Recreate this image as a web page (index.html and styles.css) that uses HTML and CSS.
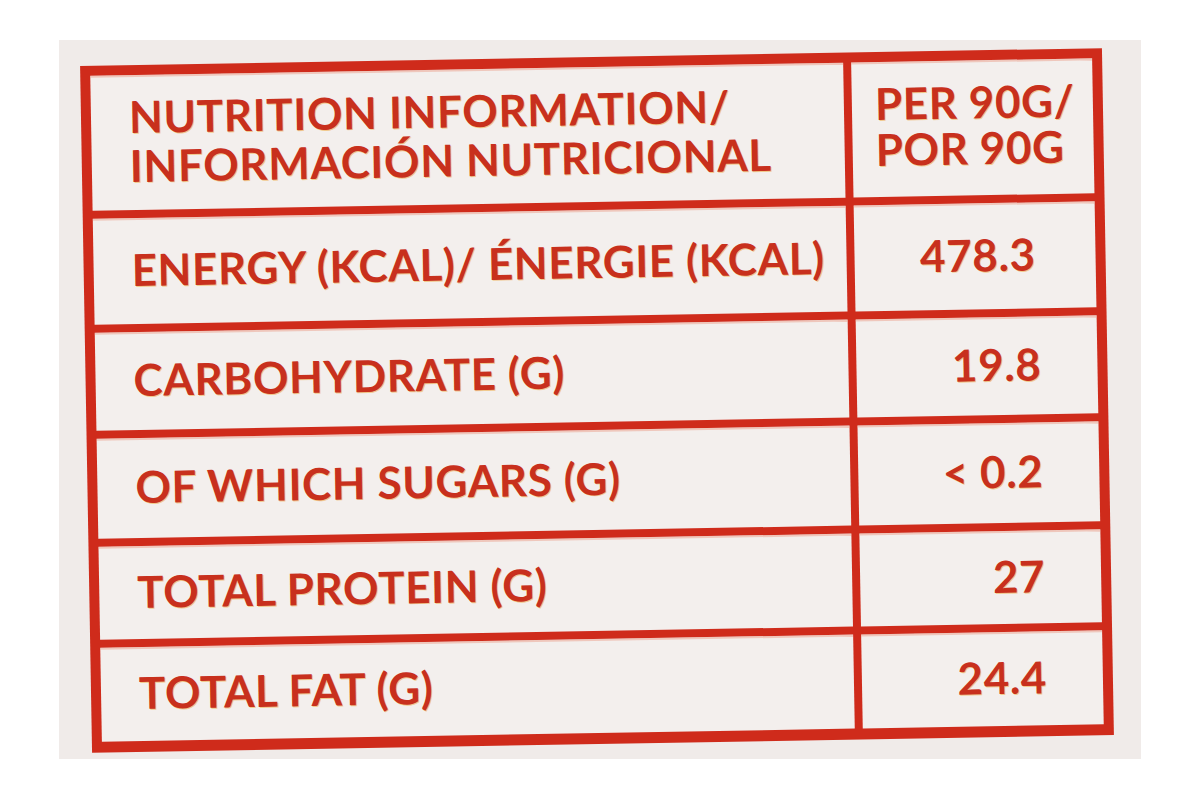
FILE: index.html
```html
<!DOCTYPE html>
<html lang="en">
<head>
<meta charset="utf-8">
<title>Nutrition Information</title>
<link rel="stylesheet" href="styles.css">
</head>
<body>
  <div class="photo">
    <div class="label">
      <div class="cell head-left">
        <span class="line">NUTRITION INFORMATION/</span>
        <span class="line">INFORMACIÓN NUTRICIONAL</span>
      </div>
      <div class="cell head-right">
        <span class="line">PER 90G/</span>
        <span class="line">POR 90G</span>
      </div>

      <div class="cell name">ENERGY (KCAL)/ ÉNERGIE (KCAL)</div>
      <div class="cell value v-energy">478.3</div>

      <div class="cell name">CARBOHYDRATE (G)</div>
      <div class="cell value">19.8</div>

      <div class="cell name">OF WHICH SUGARS (G)</div>
      <div class="cell value">&lt; 0.2</div>

      <div class="cell name">TOTAL PROTEIN (G)</div>
      <div class="cell value">27</div>

      <div class="cell name">TOTAL FAT (G)</div>
      <div class="cell value">24.4</div>
    </div>
  </div>
</body>
</html>
```

FILE: styles.css
```css
html, body {
  margin: 0;
  padding: 0;
  background: #ffffff;
}

body {
  padding: 40px 59px 0;
}

.photo {
  width: 1082px;
  height: 719px;
  background: #f0ebe9;
  display: flex;
  align-items: center;
  justify-content: center;
}

.label {
  display: grid;
  grid-template-columns: 753px 241px;
  grid-template-rows: 135px 106px 98px 100px 93px 94px;
  gap: 8px 8px;
  padding: 10px 10px 11px;
  background: #cf2b1b;
  transform: rotate(-1deg);
  margin: 2px 6px 0 0;
}

.cell {
  background: #f3efed;
  display: flex;
  align-items: center;
  color: #c8301d;
  font-family: "Lato", "DejaVu Sans", sans-serif;
  font-weight: 700;
  font-size: 44px;
  line-height: 1;
  letter-spacing: 0.6px;
  text-shadow: 1px 1px 0 rgba(240, 170, 60, 0.55);
  box-shadow: inset 0 2px 0 rgba(235, 160, 140, 0.5);
  white-space: nowrap;
}

.line {
  display: block;
}

.head-left {
  flex-direction: column;
  align-items: flex-start;
  justify-content: center;
  padding: 0 0 4px 38px;
  line-height: 49px;
}

.head-right {
  flex-direction: column;
  align-items: flex-start;
  justify-content: flex-start;
  padding: 18px 0 0 23px;
  line-height: 46px;
}

.name {
  padding: 0 0 4px 38px;
}

.value {
  justify-content: flex-end;
  padding: 0 56px 4px 0;
}

.v-energy {
  padding-right: 60px;
}
```
